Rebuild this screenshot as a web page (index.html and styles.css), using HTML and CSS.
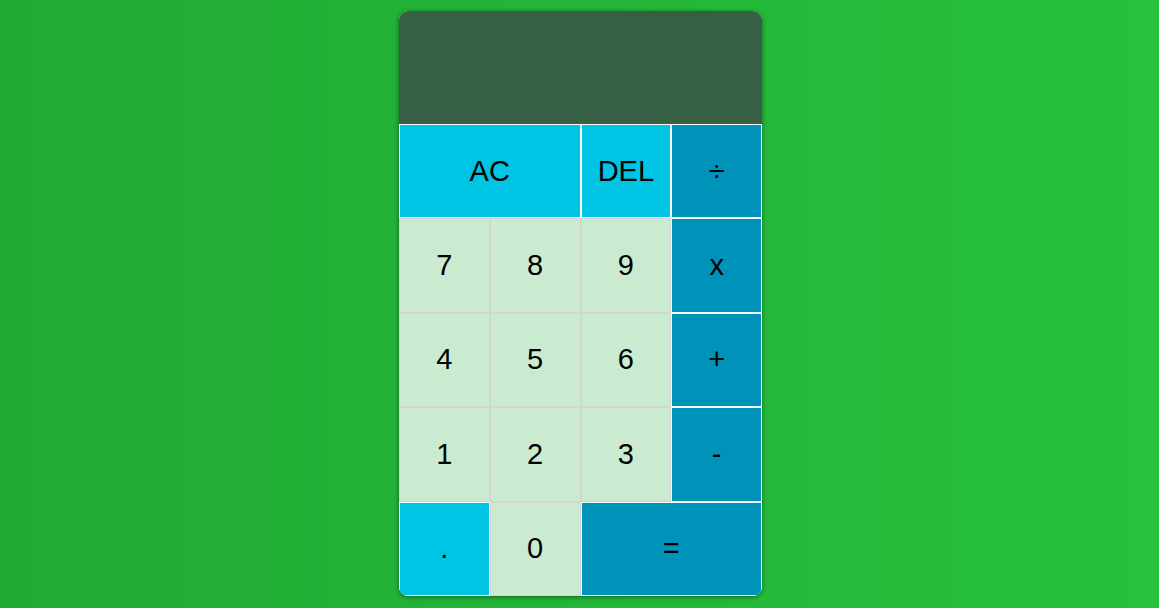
FILE: index.html
```html
<!DOCTYPE html>
<html lang="en">
<head>
<meta charset="utf-8">
<title>Calculator</title>
<link rel="stylesheet" href="styles.css">
</head>
<body>
<div class="calculator">
  <div class="display"></div>
  <button class="key op-light span-2">AC</button>
  <button class="key op-light">DEL</button>
  <button class="key op-dark">÷</button>
  <button class="key num">7</button>
  <button class="key num">8</button>
  <button class="key num">9</button>
  <button class="key op-dark">x</button>
  <button class="key num">4</button>
  <button class="key num">5</button>
  <button class="key num">6</button>
  <button class="key op-dark">+</button>
  <button class="key num">1</button>
  <button class="key num">2</button>
  <button class="key num">3</button>
  <button class="key op-dark">-</button>
  <button class="key op-light">.</button>
  <button class="key num">0</button>
  <button class="key op-dark span-2">=</button>
</div>
</body>
</html>
```
FILE: styles.css
```css
* { box-sizing: border-box; }
html, body { height: 100%; }
body {
  margin: 0;
  background: linear-gradient(to right, #21a935, #26c23c);
  font-family: "Liberation Sans", Arial, sans-serif;
  display: flex;
  justify-content: center;
  align-items: flex-start;
  padding: 11px 0 0 2px;
}
.calculator {
  width: 363px;
  height: 585px;
  display: grid;
  grid-template-columns: repeat(4, 1fr);
  grid-template-rows: 113px repeat(5, 1fr);
  border-radius: 9px;
  overflow: hidden;
  box-shadow: 0 1px 5px rgba(0, 0, 0, 0.45);
  background: #ffffff;
}
.display {
  grid-column: 1 / -1;
  background: #375f43;
}
.key {
  font-family: "Liberation Sans", Arial, sans-serif;
  font-size: 29px;
  color: #000;
  border: 1px solid #f4fbff;
  margin: 0;
  padding: 0;
  outline: none;
  cursor: pointer;
}
.span-2 { grid-column: span 2; }
.num {
  background: #cbebd0;
  border-color: #d4d4d4;
}
.op-light { background: #00c4e3; }
.op-dark { background: #0093b9; }
```
